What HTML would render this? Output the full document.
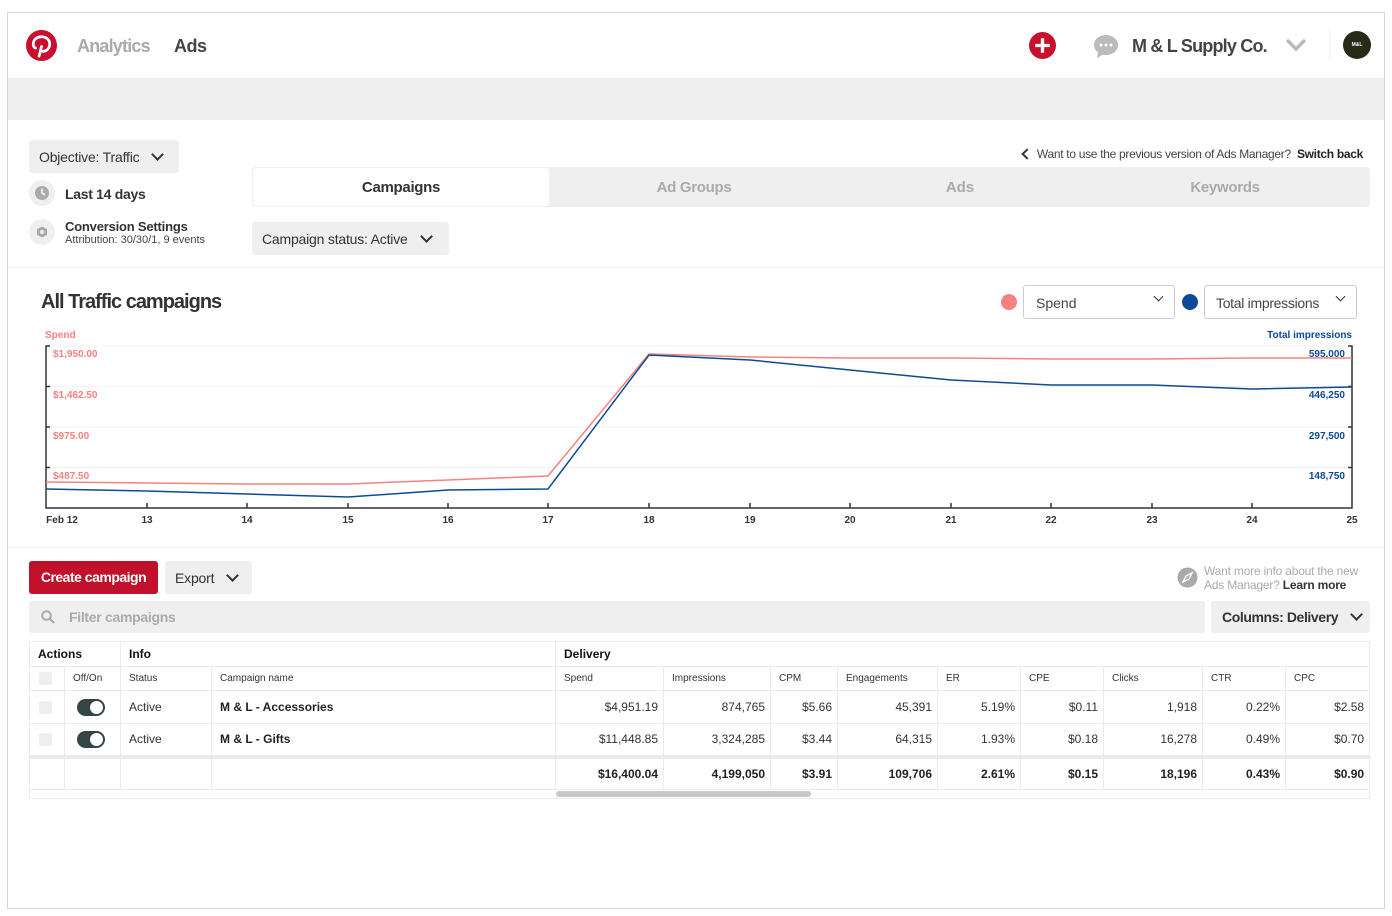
<!DOCTYPE html>
<html><head><meta charset="utf-8"><style>
*{box-sizing:border-box;margin:0;padding:0}
body{width:1392px;height:916px;background:#fff;font-family:"Liberation Sans",Arial,sans-serif;color:#333;position:relative;overflow:hidden}
.a{position:absolute;white-space:nowrap}
.frame{left:7px;top:12px;width:1378px;height:897px;border:1px solid #d6d6d6}
.btn{background:#efefef;border-radius:3px;font-size:14px;color:#333;display:flex;align-items:center;letter-spacing:-.2px}
.chev{display:inline-block;width:9px;height:9px;border-right:2px solid #333;border-bottom:2px solid #333;transform:rotate(45deg);margin-top:-5px}
table{border-collapse:collapse;table-layout:fixed;font-size:12px}
td{border:1px solid #ebebeb;padding:0 5px;white-space:nowrap;overflow:hidden}
.r{text-align:right}
.h1 td{height:25px;font-weight:bold;font-size:12px;color:#111}
.h2 td{height:24px;font-size:10px;color:#333}
.d td{height:33px;color:#333}
.t td{height:33px;font-weight:bold;color:#222;border-top:4px solid #ebebeb}
.sw{width:28px;height:17px;border-radius:9px;background:#354545;position:relative;margin-left:7px}
.sw:after{content:"";position:absolute;right:2px;top:2px;width:13px;height:13px;border-radius:50%;background:#fff}
.cb{width:13px;height:13px;background:#eee;border-radius:2px}
</style></head><body>
<div class="a frame"></div>
<svg class="a" style="left:26px;top:30px" width="31" height="31" viewBox="0 0 32 32"><circle cx="16" cy="16" r="16" fill="#c8102e"/><path d="M13.5 27 L16 17 M16.5 22c4 .5 8-2.5 8-7.5 0-4.5-3.7-7.5-8.5-7.5-5 0-8.5 3.3-8.5 7.4 0 2 .8 3.6 2.3 4.3" stroke="#fff" stroke-width="2.8" fill="none" stroke-linecap="round"/></svg>
<div class="a" style="left:77px;top:36px;font-size:18px;color:#aaa;font-weight:bold;letter-spacing:-.8px">Analytics</div>
<div class="a" style="left:174px;top:36px;font-size:18px;color:#444;font-weight:bold;letter-spacing:-.5px">Ads</div>
<svg class="a" style="left:1029px;top:32px" width="27" height="27" viewBox="0 0 26 26"><circle cx="13" cy="13" r="13" fill="#c8102e"/><path d="M13 6v14M6 13h14" stroke="#fff" stroke-width="3.2"/></svg>
<svg class="a" style="left:1093px;top:33px" width="26" height="26" viewBox="0 0 26 26"><path d="M13 2C6.4 2 1 6.4 1 12c0 3 1.6 5.7 4 7.5L4 25l6-3.2c1 .2 2 .3 3 .3 6.6 0 12-4.4 12-10S19.6 2 13 2z" fill="#bbb"/><circle cx="8" cy="12" r="1.5" fill="#fff"/><circle cx="13" cy="12" r="1.5" fill="#fff"/><circle cx="18" cy="12" r="1.5" fill="#fff"/></svg>
<div class="a" style="left:1132px;top:36px;font-size:18px;font-weight:bold;color:#444;letter-spacing:-.8px">M &amp; L Supply Co.</div>
<svg class="a" style="left:1285px;top:38px" width="22" height="14" viewBox="0 0 22 14"><path d="M2 2l9 9 9-9" stroke="#bbb" stroke-width="3.5" fill="none"/></svg>
<div class="a" style="left:1329px;top:30px;width:1px;height:30px;background:#eee"></div>
<div class="a" style="left:1343px;top:31px;width:28px;height:28px;border-radius:50%;background:#262a17;color:#fff;font-size:5px;font-weight:bold;text-align:center;line-height:28px">M&amp;L</div>
<div class="a" style="left:8px;top:78px;width:1376px;height:42px;background:#efefef"></div>

<div class="a btn" style="left:29px;top:140px;width:150px;height:33px;padding-left:10px">Objective: Traffic<span class="chev" style="margin-left:14px"></span></div>
<div class="a" style="left:29px;top:180px;width:26px;height:26px;border-radius:50%;background:#efefef"></div>
<svg class="a" style="left:34px;top:185px" width="16" height="16"><circle cx="8" cy="8" r="7" fill="#aaa"/><path d="M8 3.5V8l3 2" stroke="#efefef" stroke-width="1.8" fill="none"/></svg>
<div class="a" style="left:65px;top:186px;font-size:14px;font-weight:bold;color:#333;letter-spacing:-.3px">Last 14 days</div>
<div class="a" style="left:29px;top:219px;width:26px;height:26px;border-radius:50%;background:#efefef"></div>
<svg class="a" style="left:36px;top:226px" width="12" height="12"><polygon points="6,0.5 11,3.3 11,8.7 6,11.5 1,8.7 1,3.3" fill="#aaa"/><circle cx="6" cy="6" r="2" fill="#efefef"/></svg>
<div class="a" style="left:65px;top:219px;font-size:13px;font-weight:bold;color:#333;letter-spacing:-.2px">Conversion Settings</div>
<div class="a" style="left:65px;top:234px;font-size:11px;color:#444">Attribution: 30/30/1, 9 events</div>

<div class="a" style="right:29px;top:147px;font-size:12px;color:#444;letter-spacing:-.3px"><span style="display:inline-block;width:8px;height:8px;border-left:2px solid #333;border-bottom:2px solid #333;transform:rotate(45deg);margin-right:6px"></span>Want to use the previous version of Ads Manager? &nbsp;<b style="color:#222">Switch back</b></div>
<div class="a" style="left:252px;top:167px;width:1118px;height:40px;background:#efefef;border-radius:3px"></div>
<div class="a" style="left:253px;top:168px;width:296px;height:38px;background:#fff;border-radius:3px;text-align:center;line-height:40px;font-size:15px;font-weight:bold;color:#333;letter-spacing:-.3px">Campaigns</div>
<div class="a" style="left:549px;top:168px;width:290px;line-height:40px;text-align:center;font-size:15px;font-weight:bold;color:#aaa;letter-spacing:-.3px">Ad Groups</div>
<div class="a" style="left:860px;top:168px;width:200px;line-height:40px;text-align:center;font-size:15px;font-weight:bold;color:#aaa">Ads</div>
<div class="a" style="left:1125px;top:168px;width:200px;line-height:40px;text-align:center;font-size:15px;font-weight:bold;color:#aaa;letter-spacing:-.3px">Keywords</div>
<div class="a btn" style="left:252px;top:222px;width:197px;height:33px;padding-left:10px">Campaign status: Active<span class="chev" style="margin-left:14px"></span></div>
<div class="a" style="left:8px;top:267px;width:1376px;height:1px;background:#eee"></div>

<div class="a" style="left:41px;top:291px;font-size:20px;font-weight:bold;color:#333;letter-spacing:-1px">All Traffic campaigns</div>
<div class="a" style="left:1001px;top:294px;width:16px;height:16px;border-radius:50%;background:#f78080"></div>
<div class="a" style="left:1023px;top:285px;width:152px;height:34px;border:1px solid #ccc;border-radius:3px;font-size:14px;padding:9px 12px;color:#444">Spend<span class="chev" style="position:absolute;right:12px;top:12px;width:7px;height:7px;border-width:1.8px"></span></div>
<div class="a" style="left:1182px;top:294px;width:16px;height:16px;border-radius:50%;background:#0d4a96"></div>
<div class="a" style="left:1204px;top:285px;width:153px;height:34px;border:1px solid #ccc;border-radius:3px;font-size:14px;padding:9px 11px;color:#444;letter-spacing:-.3px">Total impressions<span class="chev" style="position:absolute;right:12px;top:12px;width:7px;height:7px;border-width:1.8px"></span></div>
<svg class="a" style="left:0;top:325px" width="1392" height="205" font-family="Liberation Sans, Arial, sans-serif" font-size="10" font-weight="bold">
<text x="45" y="13" fill="#f78080">Spend</text>
<text x="1352" y="13" fill="#0d4a96" text-anchor="end">Total impressions</text>
<g stroke="#f2f2f2" stroke-width="1"><line x1="46" y1="21" x2="1352" y2="21"/><line x1="46" y1="61.5" x2="1352" y2="61.5"/><line x1="46" y1="102" x2="1352" y2="102"/><line x1="46" y1="142.5" x2="1352" y2="142.5"/></g>
<g stroke="#333" stroke-width="1.5" fill="none"><path d="M50 21H46V183H1352V21H1348"/><path d="M46 61.5h4M46 102h4M46 142.5h4M1352 61.5h-4M1352 102h-4M1352 142.5h-4"/>
<path d="M147 183v-5M247 183v-5M348 183v-5M448 183v-5M548 183v-5M649 183v-5M750 183v-5M850 183v-5M951 183v-5M1051 183v-5M1152 183v-5M1252 183v-5"/></g>
<g fill="#f78080"><text x="53" y="32">$1,950.00</text><text x="53" y="73">$1,462.50</text><text x="53" y="114">$975.00</text><text x="53" y="154">$487.50</text></g>
<g fill="#0d4a96" text-anchor="end"><text x="1345" y="32">595,000</text><text x="1345" y="73">446,250</text><text x="1345" y="114">297,500</text><text x="1345" y="154">148,750</text></g>
<polyline fill="none" stroke="#f78080" stroke-width="1.5" points="46,157 147,158 247,159 348,159 448,155 548,151 649,29 750,32 850,33 951,33 1051,34 1152,34 1252,33 1352,33"/>
<polyline fill="none" stroke="#0d4a96" stroke-width="1.5" points="46,164 147,166 247,169 348,172 448,165 548,164 649,30 750,35 850,45 951,55 1051,60 1152,60 1252,64 1352,62"/>
<g fill="#333" text-anchor="middle"><text x="62" y="198">Feb 12</text><text x="147" y="198">13</text><text x="247" y="198">14</text><text x="348" y="198">15</text><text x="448" y="198">16</text><text x="548" y="198">17</text><text x="649" y="198">18</text><text x="750" y="198">19</text><text x="850" y="198">20</text><text x="951" y="198">21</text><text x="1051" y="198">22</text><text x="1152" y="198">23</text><text x="1252" y="198">24</text><text x="1352" y="198">25</text></g>
</svg>
<div class="a" style="left:8px;top:547px;width:1376px;height:1px;background:#eee"></div>

<div class="a" style="left:29px;top:561px;width:129px;height:33px;background:#c0102a;border-radius:3px;color:#fff;font-size:14px;font-weight:bold;text-align:center;line-height:33px;letter-spacing:-.5px">Create campaign</div>
<div class="a btn" style="left:165px;top:561px;width:87px;height:33px;padding-left:10px">Export<span class="chev" style="margin-left:14px"></span></div>
<svg class="a" style="left:1177px;top:567px" width="21" height="21"><circle cx="10.5" cy="10.5" r="10" fill="#aaa"/><path d="M15 6l-3 6-6 3 3-6z" fill="none" stroke="#fff" stroke-width="1.4"/></svg>
<div class="a" style="left:1204px;top:564px;font-size:12px;color:#aaa;line-height:14px;letter-spacing:-.2px">Want more info about the new<br>Ads Manager? <b style="color:#333">Learn more</b></div>
<div class="a" style="left:29px;top:601px;width:1176px;height:32px;background:#efefef;border-radius:3px"></div>
<svg class="a" style="left:41px;top:610px" width="14" height="14"><circle cx="5.5" cy="5.5" r="4.3" stroke="#aaa" stroke-width="2" fill="none"/><path d="M9 9l4 4" stroke="#aaa" stroke-width="2.2"/></svg>
<div class="a" style="left:69px;top:609px;font-size:14px;font-weight:bold;color:#aaa;letter-spacing:-.3px">Filter campaigns</div>
<div class="a btn" style="left:1211px;top:601px;width:159px;height:32px;padding-left:11px;font-weight:bold;white-space:nowrap;letter-spacing:-.4px">Columns: Delivery<span class="chev" style="margin-left:14px"></span></div>

<table class="a" style="left:29px;top:641px;width:1340px">
<colgroup><col style="width:35px"><col style="width:56px"><col style="width:91px"><col style="width:344px"><col style="width:108px"><col style="width:107px"><col style="width:67px"><col style="width:100px"><col style="width:83px"><col style="width:83px"><col style="width:99px"><col style="width:83px"><col style="width:84px"></colgroup>
<tr class="h1"><td colspan="2" style="padding-left:8px">Actions</td><td colspan="2" style="padding-left:8px">Info</td><td colspan="9" style="padding-left:8px">Delivery</td></tr>
<tr class="h2"><td><div class="cb" style="margin-left:4px"></div></td><td style="padding-left:8px">Off/On</td><td style="padding-left:8px">Status</td><td style="padding-left:8px">Campaign name</td><td style="padding-left:8px">Spend</td><td style="padding-left:8px">Impressions</td><td style="padding-left:8px">CPM</td><td style="padding-left:8px">Engagements</td><td style="padding-left:8px">ER</td><td style="padding-left:8px">CPE</td><td style="padding-left:8px">Clicks</td><td style="padding-left:8px">CTR</td><td style="padding-left:8px">CPC</td></tr>
<tr class="d"><td><div class="cb" style="margin-left:4px"></div></td><td><div class="sw"></div></td><td style="padding-left:8px">Active</td><td style="padding-left:8px;font-weight:bold;color:#222">M &amp; L - Accessories</td><td class="r">$4,951.19</td><td class="r">874,765</td><td class="r">$5.66</td><td class="r">45,391</td><td class="r">5.19%</td><td class="r">$0.11</td><td class="r">1,918</td><td class="r">0.22%</td><td class="r">$2.58</td></tr>
<tr class="d"><td><div class="cb" style="margin-left:4px"></div></td><td><div class="sw"></div></td><td style="padding-left:8px">Active</td><td style="padding-left:8px;font-weight:bold;color:#222">M &amp; L - Gifts</td><td class="r">$11,448.85</td><td class="r">3,324,285</td><td class="r">$3.44</td><td class="r">64,315</td><td class="r">1.93%</td><td class="r">$0.18</td><td class="r">16,278</td><td class="r">0.49%</td><td class="r">$0.70</td></tr>
<tr class="t"><td></td><td></td><td></td><td></td><td class="r">$16,400.04</td><td class="r">4,199,050</td><td class="r">$3.91</td><td class="r">109,706</td><td class="r">2.61%</td><td class="r">$0.15</td><td class="r">18,196</td><td class="r">0.43%</td><td class="r">$0.90</td></tr>
<tr><td colspan="13" style="height:9px;border-top:none"></td></tr>
</table>
<div class="a" style="left:556px;top:791px;width:255px;height:6px;border-radius:3px;background:#c8c8c8"></div>
</body></html>
